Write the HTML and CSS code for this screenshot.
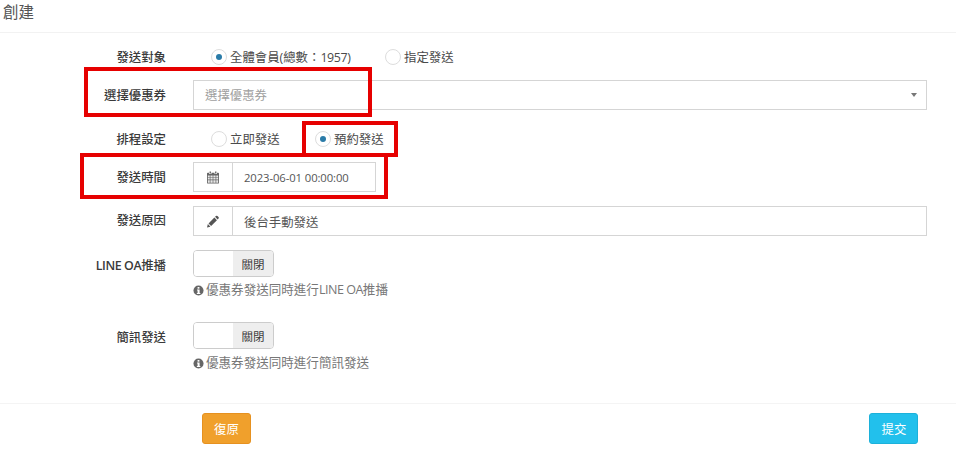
FILE: index.html
```html
<!DOCTYPE html>
<html lang="zh-Hant">
<head>
<meta charset="utf-8">
<title>創建</title>
<link rel="stylesheet" href="styles.css">
</head>
<body>
<div class="page">
  <header class="head">創建</header>
  <form class="form">
    <div class="row row-1">
      <div class="label">發送對象</div>
      <div class="field radios">
        <span class="radio-item wide"><i class="radio on"></i>全體會員(總數：<span class="tight">1957)</span></span>
        <span class="radio-item"><i class="radio"></i>指定發送</span>
      </div>
    </div>
    <div class="row row-2">
      <div class="label">選擇優惠券</div>
      <div class="field">
        <div class="box select"><span class="placeholder">選擇優惠券</span><i class="caret"></i></div>
      </div>
    </div>
    <div class="row row-3">
      <div class="label">排程設定</div>
      <div class="field radios">
        <span class="radio-item short"><i class="radio"></i>立即發送</span>
        <span class="radio-item"><i class="radio on"></i>預約發送</span>
      </div>
    </div>
    <div class="row row-4">
      <div class="label">發送時間</div>
      <div class="field">
        <div class="box group date">
          <span class="addon">
            <svg class="icon" viewBox="0 0 14 14"><path fill="#666" d="M3 0h1.600v2.400H3zM9.400 0H11v2.400H9.400zM1 1.400h1.400v1.600h2.800V1.400h3.600v1.600h2.800V1.400H13a1 1 0 0 1 1 1V13a1 1 0 0 1-1 1H1a1 1 0 0 1-1-1V2.400a1 1 0 0 1 1-1z"/><path fill="#e8e8e8" d="M1 4.600h2.200v2H1zM4 4.600h2.600v2H4zM7.400 4.600H10v2H7.400zM10.800 4.600H13v2h-2.200zM1 7.400h2.200v2H1zM4 7.400h2.600v2H4zM7.400 7.400H10v2H7.400zM10.800 7.400H13v2h-2.200zM1 10.200h2.200V13H1zM4 10.200h2.600V13H4zM7.400 10.200H10V13H7.400zM10.800 10.200H13V13h-2.200z"/></svg>
          </span>
          <span class="value stamp">2023-06-01 00:00:00</span>
        </div>
      </div>
    </div>
    <div class="row row-5">
      <div class="label">發送原因</div>
      <div class="field">
        <div class="box group">
          <span class="addon">
            <svg class="icon" viewBox="0 0 14 14"><path fill="#555" d="M0 14l1-4 3 3zM1.800 9.200l6.800-6.800 3 3-6.800 6.800zM9.400 1.600l1-1a1.300 1.300 0 0 1 1.800 0l1.200 1.200a1.300 1.300 0 0 1 0 1.800l-1 1z"/></svg>
          </span>
          <span class="value">後台手動發送</span>
        </div>
      </div>
    </div>
    <div class="row row-6">
      <div class="label"><span class="tight bold">LINE OA</span>推播</div>
      <div class="field">
        <div class="toggle"><span class="knob"></span><span class="state">關閉</span></div>
        <p class="help"><svg class="info" viewBox="0 0 12 12"><circle cx="6" cy="6" r="5.500" fill="#666"/><rect x="5" y="2.200" width="2" height="1.800" fill="#fff"/><path fill="#fff" d="M4.400 5h2.800v3.800h.8v1H4.200v-1H5V6H4.400z"/></svg>優惠券發送同時進行<span class="tight">LINE OA</span>推播</p>
      </div>
    </div>
    <div class="row row-7">
      <div class="label">簡訊發送</div>
      <div class="field">
        <div class="toggle"><span class="knob"></span><span class="state">關閉</span></div>
        <p class="help help-low"><svg class="info" viewBox="0 0 12 12"><circle cx="6" cy="6" r="5.500" fill="#666"/><rect x="5" y="2.200" width="2" height="1.800" fill="#fff"/><path fill="#fff" d="M4.400 5h2.800v3.800h.8v1H4.200v-1H5V6H4.400z"/></svg>優惠券發送同時進行簡訊發送</p>
      </div>
    </div>
  </form>
  <footer class="foot">
    <button type="button" class="btn reset">復原</button>
    <button type="button" class="btn submit">提交</button>
  </footer>
  <div class="mark mark-a"></div>
  <div class="mark mark-b"></div>
  <div class="mark mark-c"></div>
</div>
</body>
</html>
```
FILE: styles.css
```css
* { box-sizing: border-box; }
html, body { margin: 0; padding: 0; background: #fff; }
body {
  font-family: "Open Sans", "Noto Sans CJK TC", sans-serif;
  font-size: 12.4px;
  color: #4a4a4a;
}
.page { position: relative; width: 956px; height: 449px; overflow: hidden; }
.head {
  height: 33px;
  padding: 1px 0 0 3px;
  font-size: 15.500px;
  line-height: 22px;
  color: #555;
  border-bottom: 1px solid #f2f2f2;
}
.form { display: flex; flex-direction: column; }
.row { display: flex; align-items: center; }
.label {
  width: 166px;
  flex: none;
  text-align: right;
  font-weight: 500;
  color: #3a3a3a;
}
.tight { letter-spacing: -0.4px; }
.bold { font-weight: 600; }
.stamp { font-size: 11.300px; letter-spacing: -0.1px; }
.field { margin-left: 27px; width: 734px; flex: none; }
.row-1 { height: 30px; margin-top: 9px; }
.row-2 { height: 30px; margin-top: 8px; }
.row-3 { height: 30px; margin-top: 14px; }
.row-4 { height: 30px; margin-top: 8px; }
.row-5 { height: 30px; margin-top: 14px; }
.row-5 .label { padding-bottom: 2px; }
.row-5 .value { padding-top: 2px; }
.row-6 { margin-top: 14px; align-items: flex-start; }
.row-7 { margin-top: 23px; align-items: flex-start; }
.row-6 .label, .row-7 .label { padding-top: 6px; }
.radios { display: flex; align-items: center; padding-left: 18px; }
.radio-item { display: flex; align-items: center; }
.radio-item.wide { width: 174px; }
.radio-item.short { width: 104px; }
.radio {
  width: 16px; height: 16px;
  margin-right: 3px;
  border: 1px solid #ddd;
  border-radius: 50%;
  background: #fff;
  display: flex; align-items: center; justify-content: center;
}
.radio.on::after {
  content: "";
  width: 6px; height: 6px;
  border-radius: 50%;
  background: #2a7ba8;
}
.box {
  height: 30px;
  border: 1px solid #d5d5d5;
  background: #fff;
  display: flex;
  align-items: center;
}
.select { justify-content: space-between; padding: 0 9px 0 11px; }
.placeholder { color: #a0a0a0; }
.caret {
  width: 0; height: 0;
  border-left: 3px solid transparent;
  border-right: 3px solid transparent;
  border-top: 4px solid #777;
}
.date { width: 183px; }
.addon {
  width: 39px; height: 100%;
  flex: none;
  display: flex; align-items: center; justify-content: center;
  border-right: 1px solid #d5d5d5;
}
.icon { width: 12px; height: 13px; display: block; }
.value { padding-left: 11px; color: #555; }
.toggle {
  display: flex;
  width: 81px; height: 27px;
  border: 1px solid #ccc;
  border-radius: 4px;
  overflow: hidden;
}
.knob { width: 39px; background: #fff; }
.state {
  flex: 1;
  background: #eee;
  color: #3a3a3a;
  font-size: 11.500px;
  display: flex; align-items: center; justify-content: center;
}
.help {
  margin: 4px 0 0;
  color: #777;
  font-size: 12.550px;
  display: flex;
  align-items: center;
  line-height: 18px;
}
.help .tight { letter-spacing: -0.5px; }
.help-low { margin-top: 5px; }
.info { width: 11px; height: 11px; margin-right: 2px; flex: none; }
.foot {
  position: absolute;
  left: 0; right: 0; top: 403px;
  height: 46px;
  border-top: 1px solid #f4f4f4;
  display: flex;
  justify-content: space-between;
  padding: 9px 38px 0 202px;
}
.btn {
  width: 49px; height: 31px;
  border-radius: 3px;
  font: inherit;
  color: #fff;
  padding: 0;
}
.reset { background: #f0a02c; border: 1px solid #e69120; }
.submit { background: #22c0ec; border: 1px solid #1cb1da; padding-left: 1px; }
.mark { position: absolute; border: 4px solid #e60000; }
.mark-a { left: 84px; top: 67px; width: 288px; height: 50px; }
.mark-b { left: 302px; top: 121px; width: 96px; height: 36px; }
.mark-c { left: 80px; top: 153px; width: 308px; height: 46px; }
```
